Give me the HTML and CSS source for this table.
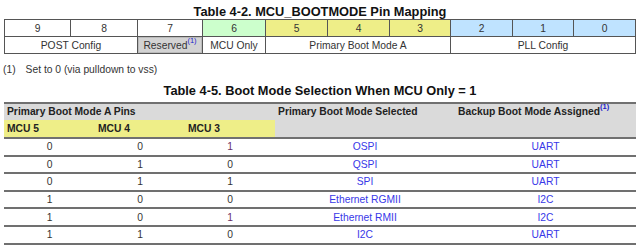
FILE: index.html
```html
<!DOCTYPE html>
<html>
<head>
<meta charset="utf-8">
<link rel="stylesheet" href="styles.css">
</head>
<body>
<div class="page">
  <div class="title t1">Table 4-2. MCU_BOOTMODE Pin Mapping</div>
  <table class="pins">
    <colgroup>
      <col style="width:66px"><col style="width:67px"><col style="width:65px"><col style="width:63px"><col style="width:62px">
      <col style="width:62px"><col style="width:61px"><col style="width:62px"><col style="width:61px"><col style="width:62px">
    </colgroup>
    <tr>
      <td>9</td><td>8</td><td>7</td>
      <td class="green">6</td>
      <td class="yellow">5</td><td class="yellow">4</td><td class="yellow">3</td>
      <td class="blue">2</td><td class="blue">1</td><td class="blue">0</td>
    </tr>
    <tr>
      <td colspan="2">POST Config</td>
      <td class="reserved">Reserved<sup class="fn">(1)</sup></td>
      <td>MCU Only</td>
      <td colspan="3">Primary Boot Mode A</td>
      <td colspan="3">PLL Config</td>
    </tr>
  </table>
  <div class="note"><span class="nnum">(1)</span><span>Set to 0 (via pulldown to vss)</span></div>

  <div class="title t2">Table 4-5. Boot Mode Selection When MCU Only = 1</div>
  <table class="modes">
    <colgroup>
      <col style="width:91px"><col style="width:90px"><col style="width:90px"><col style="width:180px"><col style="width:181px">
    </colgroup>
    <tr class="h1">
      <th colspan="3" class="gray">Primary Boot Mode A Pins</th>
      <th rowspan="2" class="gray">Primary Boot Mode Selected</th>
      <th rowspan="2" class="gray">Backup Boot Mode Assigned<sup class="fn">(1)</sup></th>
    </tr>
    <tr class="h2">
      <th class="ylw">MCU 5</th><th class="ylw">MCU 4</th><th class="ylw">MCU 3</th>
    </tr>
    <tr><td>0</td><td>0</td><td class="pur">1</td><td class="lnk">OSPI</td><td class="lnk">UART</td></tr>
    <tr><td>0</td><td>1</td><td>0</td><td class="lnk">QSPI</td><td class="lnk">UART</td></tr>
    <tr><td>0</td><td>1</td><td>1</td><td class="lnk">SPI</td><td class="lnk">UART</td></tr>
    <tr><td>1</td><td>0</td><td>0</td><td class="lnk">Ethernet RGMII</td><td class="lnk">I2C</td></tr>
    <tr><td>1</td><td>0</td><td class="pur">1</td><td class="lnk">Ethernet RMII</td><td class="lnk">I2C</td></tr>
    <tr><td>1</td><td>1</td><td>0</td><td class="lnk">I2C</td><td class="lnk">UART</td></tr>
  </table>
</div>
</body>
</html>
```

FILE: styles.css
```css
html, body {
  margin: 0;
  padding: 0;
  background: #fff;
}
.page {
  width: 640px;
  font-family: "Liberation Sans", Arial, sans-serif;
  font-size: 10.3px;
  color: #333;
}
.title {
  font-weight: bold;
  font-size: 12.8px;
  color: #111;
  text-align: center;
  line-height: 15px;
}
.t1 {
  padding-top: 4px;
  height: 15px;
}
.pins {
  margin-left: 4px;
  border-collapse: collapse;
  table-layout: fixed;
  width: 631px;
  border: 1px solid #444;
}
.pins td {
  border: 1px solid #555;
  text-align: center;
  height: 16px;
  padding: 0;
  line-height: 15px;
}
.green { background: #ccffcc; }
.yellow { background: #eeee88; }
.blue { background: #bfe3ff; }
.reserved {
  background: #d3d3d3;
  box-shadow: inset 0 0 0 1px #bbb;
}
.fn {
  color: #2222cc;
  font-size: 7.5px;
  vertical-align: top;
  line-height: 8px;
  position: relative;
  top: -1px;
}
.note {
  display: flex;
  gap: 10px;
  margin: 10px 0 0 3px;
  line-height: 12px;
  color: #333;
}
.t2 {
  margin-top: 7px;
  height: 19px;
}
.modes {
  margin-left: 4px;
  border-collapse: collapse;
  table-layout: fixed;
  width: 632px;
  border-top: 2px solid #707070;
}
.modes th {
  font-weight: bold;
  color: #222;
  text-align: left;
  padding: 0 0 0 3px;
  vertical-align: top;
  line-height: 16px;
}
.modes .h1 th { height: 16px; }
.modes .h2 th {
  height: 17px;
  vertical-align: middle;
  border-bottom: 2px solid #707070;
}
.modes th.gray { background: #dadada; }
.modes th.ylw { background: #eeee88; }
.modes th[rowspan] { border-bottom: 2px solid #707070; }
.modes td {
  text-align: center;
  padding: 0;
  height: 15.6px;
  line-height: 15px;
  border-bottom: 2px solid #707070;
}
.lnk { color: #3838e8; }
.pur { color: #6a2f66; }
```
